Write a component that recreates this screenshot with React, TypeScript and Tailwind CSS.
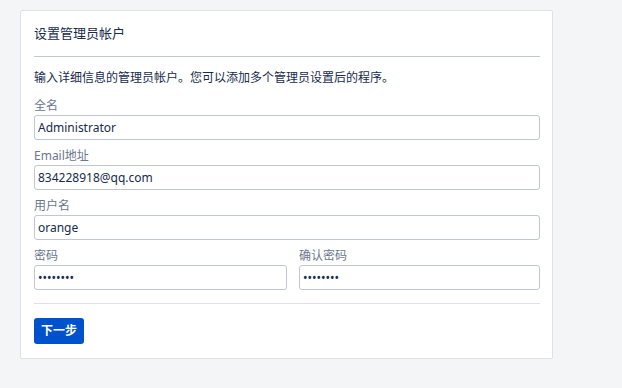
import React from "react";

const fieldCls =
  "block w-full h-[25px] border border-[#c1c7d0] rounded-[3px] bg-white px-[3px] text-[12px] text-[#172b4d] outline-none";

const Label = ({ children, first }: { children: React.ReactNode; first?: boolean }) => (
  <div className={`${first ? "mt-[12px]" : "mt-[8px]"} mb-[1px] h-[16px] leading-[16px] text-[12px] text-[#6b778c]`}>
    {children}
  </div>
);

export default function App() {
  return (
    <div
      className="min-h-[388px] w-full bg-[#f4f5f7] pt-[10px] pl-[20px]"
      style={{ fontFamily: '"Noto Sans", "Noto Sans CJK SC", sans-serif' }}
    >
      <div className="w-[533px] bg-white border border-[#dfe1e6] rounded-[2px] pl-[13px] pr-[12px] pb-[14px]">
        {/* header */}
        <div className="pt-[13px] pb-[14px] border-b border-[#c1c7d0]">
          <h2 className="text-[13px] leading-[18px] text-[#172b4d] font-normal">设置管理员帐户</h2>
        </div>

        <p className="mt-[13px] text-[12px] leading-[16px] text-[#172b4d]">
          输入详细信息的管理员帐户。您可以添加多个管理员设置后的程序。
        </p>

        <Label first>全名</Label>
        <input className={fieldCls} defaultValue="Administrator" readOnly />

        <Label>Email地址</Label>
        <input className={fieldCls} defaultValue="834228918@qq.com" readOnly />

        <Label>用户名</Label>
        <input className={fieldCls} defaultValue="orange" readOnly />

        <div className="grid grid-cols-[253px_1fr] gap-x-[12px]">
          <div>
            <Label>密码</Label>
            <input type="password" className={fieldCls} defaultValue="12345678" readOnly />
          </div>
          <div>
            <Label>确认密码</Label>
            <input type="password" className={fieldCls} defaultValue="12345678" readOnly />
          </div>
        </div>

        <div className="mt-[13px] border-t border-[#dfe1e6] pt-[13px]">
          <button className="h-[26px] w-[50px] rounded-[3px] bg-[#0052cc] text-[12px] font-bold text-white leading-[26px]">
            下一步
          </button>
        </div>
      </div>
    </div>
  );
}
